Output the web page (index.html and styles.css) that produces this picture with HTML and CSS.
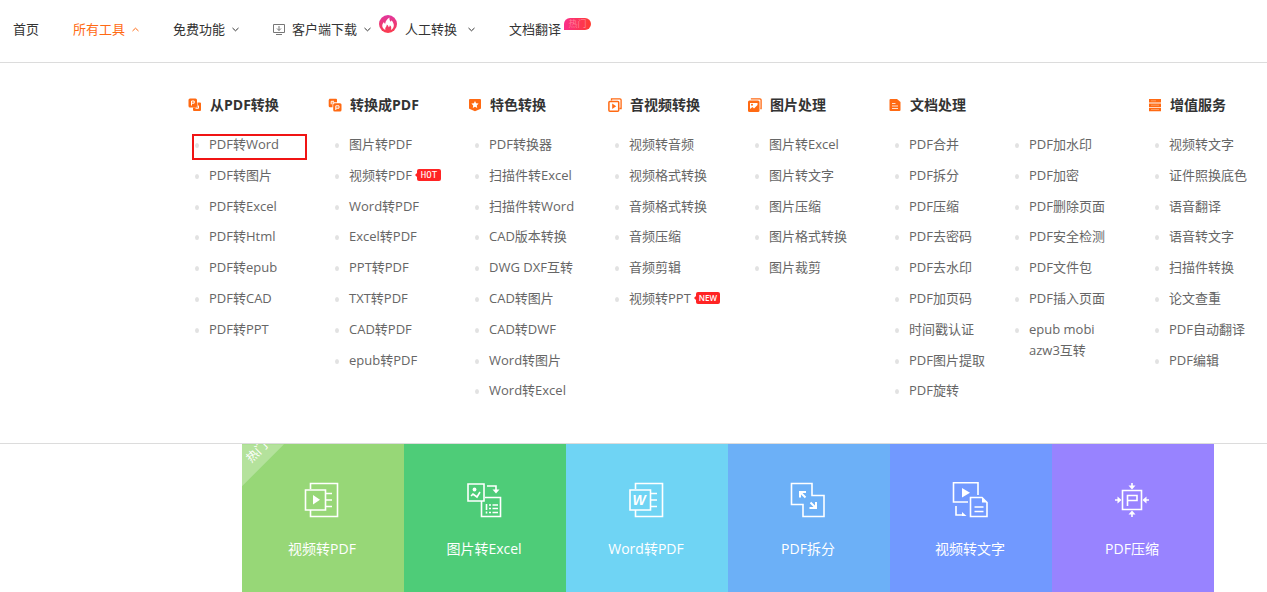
FILE: index.html
```html
<!DOCTYPE html>
<html lang="zh-CN">
<head>
<meta charset="utf-8">
<title>PDF转换工具</title>
<link rel="stylesheet" href="styles.css">
</head>
<body>
<header class="topbar">
  <nav class="nav">
    <a class="nav-item" href="#">首页</a>
    <button class="nav-item active" type="button" aria-expanded="true">所有工具<svg class="chev" viewBox="0 0 7 5"><path d="M.5 4 3.500 1.200 6.500 4"/></svg></button>
    <button class="nav-item" type="button">免费功能<svg class="chev" viewBox="0 0 7 5"><path d="M.5 1 3.500 3.800 6.500 1"/></svg></button>
    <button class="nav-item" type="button"><svg class="client" viewBox="0 0 12 12"><path d="M.5 1.500h11v8H.5zM3 11.500h6M6 3v4.500M4 5.500l2 2 2-2"/></svg>客户端下载<svg class="chev" viewBox="0 0 7 5"><path d="M.5 1 3.500 3.800 6.500 1"/></svg>
      <svg class="fire" viewBox="0 0 18 18"><defs><linearGradient id="fg" x1="0" y1="0" x2="0" y2="1"><stop offset="0" stop-color="#e0369f"/><stop offset="1" stop-color="#fb3c4c"/></linearGradient></defs><circle cx="9" cy="9" r="9" fill="url(#fg)"/><path d="M6.500 15C2.500 13 2.500 9.500 5 7c.2 1.200.6 1.600 1.200 1.800C6.500 6 8 4 10.500 2.500c-.3 2 .2 3 1.200 4.300.5-.4.800-.8.900-1.500 3.200 4 3 7.700-.8 9.700 1-2.500.3-3.800-1-4.800-.1 1.300-.6 1.700-1.100 2-.3-1.500-1-2.200-1.900-2.800.1 2.400-2.300 3-1.300 5.600z" fill="#fff"/></svg>
    </button>
    <button class="nav-item roomy" type="button">人工转换<svg class="chev" viewBox="0 0 7 5"><path d="M.5 1 3.500 3.800 6.500 1"/></svg></button>
    <a class="nav-item" href="#">文档翻译<span class="hot-pill">热门</span></a>
  </nav>
</header>

<section class="mega">
  <div class="col">
    <h3><svg class="hi" viewBox="0 0 14 14"><path d="M9.500 4.500H12q1 0 1 1V12q0 1-1 1H6q-1 0-1-1V9.500h4.500z" fill="#ff6a13"/><path d="M7.500 10.300h3V7.500" fill="none" stroke="#fff"/><rect x=".5" y=".5" width="8.500" height="9" rx="1.500" fill="#ff6a13"/><path d="M3.500 7.500V3h2.700v2.200H3.500" fill="none" stroke="#fff"/></svg>从PDF转换</h3>
    <ul>
      <li class="marked"><a href="#">PDF转Word</a></li><li><a href="#">PDF转图片</a></li><li><a href="#">PDF转Excel</a></li><li><a href="#">PDF转Html</a></li><li><a href="#">PDF转epub</a></li><li><a href="#">PDF转CAD</a></li><li><a href="#">PDF转PPT</a></li>
    </ul>
  </div>
  <div class="col">
    <h3><svg class="hi" viewBox="0 0 14 14"><path d="M1.500.8H8q1 0 1 1v2.500H4.500v5H2q-1.300 0-1.300-1.300V2z" fill="#ff6a13"/><path d="M3.200 6.300V3.300H6" fill="none" stroke="#fff"/><rect x="5.200" y="5.200" width="8.300" height="8.300" rx="1.500" fill="#ff6a13"/><path d="M7.800 12V7.800h3.200v2.400H7.800" fill="none" stroke="#fff"/></svg>转换成PDF</h3>
    <ul>
      <li><a href="#">图片转PDF</a></li><li><a href="#">视频转PDF</a><span class="tag tag-wide">HOT</span></li><li><a href="#">Word转PDF</a></li><li><a href="#">Excel转PDF</a></li><li><a href="#">PPT转PDF</a></li><li><a href="#">TXT转PDF</a></li><li><a href="#">CAD转PDF</a></li><li><a href="#">epub转PDF</a></li>
    </ul>
  </div>
  <div class="col">
    <h3><svg class="hi" viewBox="0 0 14 14"><path d="M2 1h10q1 0 1 1v8q0 .8-.8 1.100L7 13.200l-5.200-2.100Q1 10.800 1 10V2q0-1 1-1z" fill="#ff6a13"/><path d="m7 3 1.100 2.300 2.500.3-1.800 1.800.4 2.500L7 8.700 4.800 9.900l.4-2.500-1.800-1.800 2.500-.3z" fill="#fff"/></svg>特色转换</h3>
    <ul>
      <li><a href="#">PDF转换器</a></li><li><a href="#">扫描件转Excel</a></li><li><a href="#">扫描件转Word</a></li><li><a href="#">CAD版本转换</a></li><li><a href="#">DWG DXF互转</a></li><li><a href="#">CAD转图片</a></li><li><a href="#">CAD转DWF</a></li><li><a href="#">Word转图片</a></li><li><a href="#">Word转Excel</a></li>
    </ul>
  </div>
  <div class="col">
    <h3><svg class="hi" viewBox="0 0 14 14"><path d="M3.500 2.500V.9H12q1.100 0 1.100 1.100v8.500h-1.700" fill="none" stroke="#ff6a13" stroke-width="1.300"/><rect x=".9" y="3.400" width="9.800" height="9.800" rx="1" fill="none" stroke="#ff6a13" stroke-width="1.500"/><path d="M4.200 5.600 8.200 8.300l-4 2.700z" fill="#ff6a13"/></svg>音视频转换</h3>
    <ul>
      <li><a href="#">视频转音频</a></li><li><a href="#">视频格式转换</a></li><li><a href="#">音频格式转换</a></li><li><a href="#">音频压缩</a></li><li><a href="#">音频剪辑</a></li><li><a href="#">视频转PPT</a><span class="tag">NEW</span></li>
    </ul>
  </div>
  <div class="col">
    <h3><svg class="hi" viewBox="0 0 14 14"><path d="M3.500 1.500V.9H12q1.100 0 1.100 1.100v8.500h-.8" fill="none" stroke="#ff6a13" stroke-width="1.300"/><rect x="0" y="2.600" width="11.500" height="11.400" rx="1.500" fill="#ff6a13"/><path d="M2 5h7.500v2L6 10.500 4.500 9 2 11z" fill="#fff"/><circle cx="4" cy="6.800" r="1" fill="#ff6a13"/></svg>图片处理</h3>
    <ul>
      <li><a href="#">图片转Excel</a></li><li><a href="#">图片转文字</a></li><li><a href="#">图片压缩</a></li><li><a href="#">图片格式转换</a></li><li><a href="#">图片裁剪</a></li>
    </ul>
  </div>
  <div class="col col-double">
    <h3><svg class="hi" viewBox="0 0 14 14"><path d="M2.500 1H9l3.500 3v8q0 1-1 1h-9q-1 0-1-1V2q0-1 1-1z" fill="#ff6a13"/><path d="M4 5.500h3.500M4 8h6M4 10.500h6" stroke="#fff" stroke-width=".8"/></svg>文档处理</h3>
    <div class="pair">
      <ul>
        <li><a href="#">PDF合并</a></li><li><a href="#">PDF拆分</a></li><li><a href="#">PDF压缩</a></li><li><a href="#">PDF去密码</a></li><li><a href="#">PDF去水印</a></li><li><a href="#">PDF加页码</a></li><li><a href="#">时间戳认证</a></li><li><a href="#">PDF图片提取</a></li><li><a href="#">PDF旋转</a></li>
      </ul>
      <ul>
        <li><a href="#">PDF加水印</a></li><li><a href="#">PDF加密</a></li><li><a href="#">PDF删除页面</a></li><li><a href="#">PDF安全检测</a></li><li><a href="#">PDF文件包</a></li><li><a href="#">PDF插入页面</a></li><li><a href="#">epub mobi<br>azw3互转</a></li>
      </ul>
    </div>
  </div>
  <div class="col col-last">
    <h3><svg class="hi" viewBox="0 0 14 14"><path d="M1 1h12v3.600H1zM1 5.400h12V9H1zM1 9.800h12v3.400H1z" fill="#ff6a13"/><path d="M3 2.800h5M3 7.200h8M3 11.500h8" stroke="#ffb080" stroke-width=".7"/></svg>增值服务</h3>
    <ul>
      <li><a href="#">视频转文字</a></li><li><a href="#">证件照换底色</a></li><li><a href="#">语音翻译</a></li><li><a href="#">语音转文字</a></li><li><a href="#">扫描件转换</a></li><li><a href="#">论文查重</a></li><li><a href="#">PDF自动翻译</a></li><li><a href="#">PDF编辑</a></li>
    </ul>
  </div>
</section>

<main class="tiles">
  <a class="tile lime" href="#"><span class="ribbon"></span><span class="ribbon-text">热门</span>
    <svg class="ti" viewBox="0 0 36 36"><path d="M6.500 7V1.500h27v33h-27V28M1.500 8h20v20h-20zM22 11.500h6M22 18h6M22 24.500h6"/><path class="f" d="m9 13 7 4.700-7 4.700z"/></svg>视频转PDF</a>
  <a class="tile green" href="#">
    <svg class="ti" viewBox="0 0 36 36"><path d="M2 2h16v17H2zM15.500 19v15.500h19v-19H19M21 4h9v5"/><path class="f" d="M26.500 7.500h7L30 11.500z"/><circle class="f" cx="8.500" cy="7.500" r="1.900"/><path d="m5 14 2-2 4 3 3-5M20.500 22v6m0 1.500v2M23 23h2m1.500 0H32M23 26.500h2m1.500 0H32M23 30.500h2m1.500 0H32"/></svg>图片转Excel</a>
  <a class="tile cyan" href="#">
    <svg class="ti" viewBox="0 0 36 36"><path d="M7.500 7V1.500h27v33h-27V28M2 8h20.500v20H2zM23 11.500h6M23 18h6M23 24.500h6"/><text x="4.500" y="23">W</text></svg>Word转PDF</a>
  <a class="tile blue" href="#">
    <svg class="ti" viewBox="0 0 36 36"><path d="M1.500 1.500h20.500v12h12v21h-21v-12H1.500z"/><path class="thick" d="M10.500 10.500l5 5M20.500 20.500l5 5M10 15.500v-5.500h6M26 20v6h-6.500"/></svg>PDF拆分</a>
  <a class="tile indigo" href="#">
    <svg class="ti" viewBox="0 0 36 36"><path d="M16 20H1.500V.8H26V13M4 24v9h7M18.500 15.500H30l5 5v14H18.500zM22.500 25h9M22.500 29.500h9"/><path class="f" d="m10 6 8 4.700-8 4.700zM10 30l4.500 4H10zM30 15.500l5 5h-5z"/></svg>视频转文字</a>
  <a class="tile violet" href="#">
    <svg class="ti" viewBox="0 0 36 36"><path d="M8.500 8.500h19v19h-19zM13.500 24V13.500h9.500v5H14M18 1v3M18 32v3M1 18h3M32 18h3"/><path class="f" d="M14.500 3.500h7L18 7.500zM14.500 32.500h7L18 28.500zM3.500 14.500v7L7.500 18zM32.500 14.500v7L28.500 18z"/></svg>PDF压缩</a>
</main>
</body>
</html>
```
FILE: styles.css
```css
*, *::before, *::after { box-sizing: border-box; }
body {
  margin: 0;
  background: #fff;
  color: #333;
  font-family: "Open Sans", "Noto Sans CJK SC", sans-serif;
  font-size: 13px;
}
a { color: inherit; text-decoration: none; }
.topbar { border-bottom: 1px solid #dcdcdc; }
.nav {
  display: flex;
  align-items: center;
  gap: 34px;
  height: 62px;
  padding: 0 13px 4px;
}
.nav-item {
  position: relative;
  display: flex;
  align-items: center;
  gap: 7px;
  margin: 0;
  padding: 0;
  border: 0;
  background: none;
  color: #333;
  font: inherit;
  line-height: 20px;
  white-space: nowrap;
}
.nav-item.active { color: #ff6a13; }
.nav-item.roomy { gap: 11px; }
.chev { width: 7px; height: 5px; fill: none; stroke: currentColor; }
.client { width: 12px; height: 12px; fill: none; stroke: #777; }
.fire { position: absolute; left: 106px; top: -4px; width: 18px; height: 18px; }
.hot-pill {
  position: absolute;
  left: 55px;
  top: -1px;
  width: 27px;
  height: 12px;
  border-radius: 6px 6px 6px 0;
  background: linear-gradient(90deg, #fa2f8c, #ff3b30);
  color: #ff7d92;
  font-size: 9px;
  line-height: 12px;
  text-align: center;
}
.mega {
  display: grid;
  grid-template-columns: repeat(5, 140fr) 260fr 119fr;
  padding: 31px 0 42px 188px;
  border-bottom: 1px solid #dcdcdc;
}
.mega h3 {
  display: flex;
  align-items: center;
  gap: 8px;
  margin: 0 0 18px;
  color: #333;
  font-size: 14px;
  font-weight: 700;
  line-height: 22px;
  white-space: nowrap;
}
.hi { width: 14px; height: 14px; }
.mega ul {
  display: flex;
  flex-direction: column;
  gap: 10px;
  margin: 0;
  padding: 0;
  list-style: none;
}
.mega li {
  position: relative;
  display: flex;
  align-items: center;
  padding-left: 21px;
  color: #666;
  line-height: 1.6;
  white-space: nowrap;
}
.mega li::before {
  content: "";
  position: absolute;
  left: 7px;
  top: 9px;
  width: 4px;
  height: 5px;
  border-radius: 50%;
  background: #e2e2e2;
}
.mega li.marked::after {
  content: "";
  position: absolute;
  left: 4px;
  top: 0;
  width: 115px;
  height: 26px;
  border: 2px solid #f01414;
}
.pair { display: grid; grid-template-columns: 120fr 140fr; }
.tag {
  position: relative;
  width: 24px;
  height: 12px;
  margin-left: 5px;
  border-radius: 2px;
  background: #ff2424;
  color: #fff;
  font-family: "Open Sans", sans-serif;
  font-size: 8px;
  font-weight: 600;
  line-height: 12px;
  text-align: center;
}
.tag::before {
  content: "";
  position: absolute;
  left: -2px;
  top: 4px;
  border: 2px solid transparent;
  border-left-width: 0;
  border-right-color: #ff2424;
}
.tag-wide { font-family: "DejaVu Sans Mono", monospace; font-size: 9px; font-weight: 400; }
.tiles {
  display: grid;
  grid-template-columns: repeat(6, 1fr);
  padding: 0 53px 0 242px;
}
.tile {
  position: relative;
  display: flex;
  flex-direction: column;
  align-items: center;
  gap: 19px;
  padding: 38px 2px 32px 0;
  overflow: hidden;
  color: #fff;
  font-size: 14px;
  line-height: 23px;
}
.lime { background: #97d777; }
.green { background: #4ecc78; }
.cyan { background: #6fd4f4; }
.blue { background: #6cb0f7; }
.indigo { background: #7199ff; }
.violet { background: #9883ff; }
.ti { width: 36px; height: 36px; fill: none; stroke: #fff; stroke-width: 1.6; }
.ti .f { fill: #fff; stroke: none; }
.ti .thick { stroke-width: 2; }
.ti text {
  fill: #fff;
  stroke: none;
  font: italic 700 14px "Liberation Sans", sans-serif;
}
.ribbon {
  position: absolute;
  left: 0;
  top: 0;
  width: 42px;
  height: 42px;
  background: rgba(255, 255, 255, .28);
  clip-path: polygon(0 0, 100% 0, 0 100%);
}
.ribbon-text {
  position: absolute;
  left: 3px;
  top: 0;
  font-size: 12px;
  line-height: 16px;
  transform: rotate(-45deg);
}
```
